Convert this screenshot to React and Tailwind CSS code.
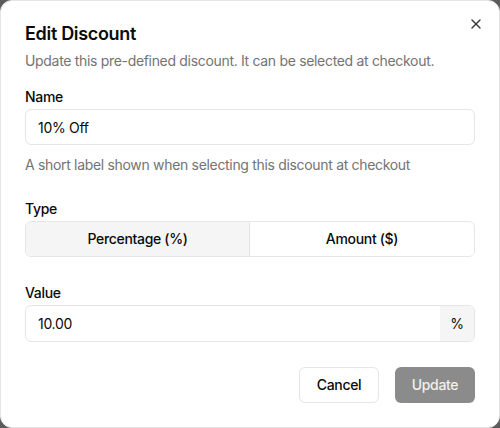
import React, { useState } from 'react';
import { X } from 'lucide-react';

const Field = ({ label, children, className = '' }) => (
    <div className={`flex flex-col gap-0.5 ${className}`}>
        <label className="text-sm leading-5 font-medium text-[#0a0a0a]">{label}</label>
        {children}
    </div>
);

export default function App() {
    const [type, setType] = useState('percentage');

    return (
        <div className="w-[500px] h-[428px] bg-[#5c5c5c]" style={{ fontFamily: 'Inter, "Noto Sans", sans-serif' }}>
            <div className="relative w-full h-full bg-white border border-[#e5e5e5] rounded-xl p-6 flex flex-col tracking-[-0.02em]">
                <button className="absolute top-[15px] right-[15px] text-[#3a3a3a]">
                    <X size={16} strokeWidth={2} />
                </button>

                <div className="flex flex-col gap-2">
                    <h2 className="text-lg leading-none font-semibold text-[#0a0a0a]">Edit Discount</h2>
                    <p className="text-sm leading-5 text-[#737373]">
                        Update this pre-defined discount. It can be selected at checkout.
                    </p>
                </div>

                <Field label="Name" className="mt-4">
                    <input
                        defaultValue="10% Off"
                        className="h-9 w-full rounded-md border border-[#e5e5e5] px-3 text-sm text-[#0a0a0a] outline-none tracking-[-0.02em]"
                    />
                    <p className="mt-2 text-sm leading-5 text-[#737373]">
                        A short label shown when selecting this discount at checkout
                    </p>
                </Field>

                <Field label="Type" className="mt-6">
                    <div className="grid grid-cols-2 h-9 rounded-md border border-[#e5e5e5] overflow-hidden">
                        <button
                            onClick={() => setType('percentage')}
                            className={`text-sm font-medium text-[#0a0a0a] border-r border-[#e5e5e5] ${type === 'percentage' ? 'bg-[#f5f5f5]' : 'bg-white'}`}
                        >
                            Percentage (%)
                        </button>
                        <button
                            onClick={() => setType('amount')}
                            className={`text-sm font-medium text-[#0a0a0a] ${type === 'amount' ? 'bg-[#f5f5f5]' : 'bg-white'}`}
                        >
                            Amount ($)
                        </button>
                    </div>
                </Field>

                <Field label="Value" className="mt-[26px]">
                    <div className="flex h-[37px] rounded-md border border-[#e5e5e5] overflow-hidden">
                        <input
                            defaultValue="10.00"
                            className="flex-1 min-w-0 px-3 text-sm text-[#0a0a0a] outline-none tracking-[-0.02em]"
                        />
                        <span className="w-[34px] flex items-center justify-center bg-[#f5f5f5] text-sm text-[#0a0a0a]">%</span>
                    </div>
                </Field>

                <div className="mt-auto flex justify-end gap-4">
                    <button className="h-9 w-20 rounded-md border border-[#e5e5e5] bg-white text-sm font-medium text-[#0a0a0a]">
                        Cancel
                    </button>
                    <button className="h-9 w-20 rounded-md bg-[#8b8b8b] text-sm font-medium text-[#f0f0f0]">
                        Update
                    </button>
                </div>
            </div>
        </div>
    );
}
